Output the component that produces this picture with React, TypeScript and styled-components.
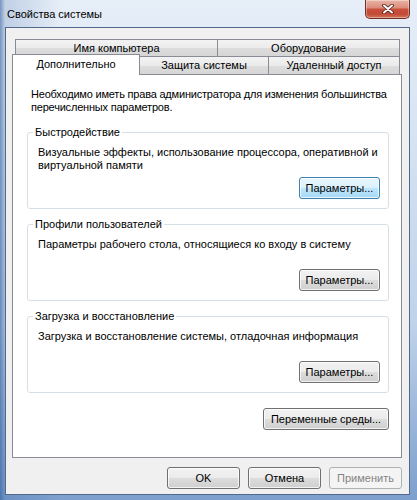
import React from 'react';
import styled, { createGlobalStyle } from 'styled-components';

// окно "Свойства системы" в стиле Windows 7

const GlobalStyle = createGlobalStyle`
  html, body {
    margin: 0;
    padding: 0;
  }
  body {
    font-family: 'Liberation Sans', Arial, sans-serif;
    font-size: 11px;
    color: #000;
    background: #9db8da;
  }
`;

const Window = styled.div`
  width: 417px;
  height: 500px;
  display: flex;
  flex-direction: column;
  overflow: hidden;
  background:
    linear-gradient(90deg, rgba(45, 90, 155, 0.6) 0px, rgba(45, 90, 155, 0.2) 5px, rgba(45, 90, 155, 0) 60px),
    linear-gradient(180deg, #e6eef8 0%, #d7e4f2 25%, #bfd2ea 65%, #7c9fcd 100%);
`;

const TitleBar = styled.div`
  height: 27px;
  display: flex;
  align-items: flex-start;
  justify-content: space-between;
  padding: 0 7px;
`;

const Title = styled.span`
  padding-top: 8px;
  line-height: 13px;
  color: #000;
`;

const CloseButton = styled.div`
  width: 45px;
  height: 19px;
  box-sizing: border-box;
  display: flex;
  align-items: center;
  justify-content: center;
  border: 1px solid #6e3128;
  border-top: none;
  border-radius: 0 0 5px 5px;
  background: linear-gradient(180deg, #eab4a7 0%, #dc8d7d 42%, #c8503c 52%, #c24a36 78%, #d5785a 100%);
  box-shadow: inset 0 0 0 1px rgba(255, 255, 255, 0.35);
`;

const Client = styled.div`
  flex: 1;
  display: flex;
  flex-direction: column;
  margin: 0 7px 5px 5px;
  padding: 11px 7px 5px 6px;
  border: 1px solid #52698a;
  background: #f0f0f0;
`;

const TabRow = styled.div<{ $front?: boolean }>`
  display: flex;
  height: ${p => (p.$front ? 18 : 17)}px;
  margin: 0 2px 0 ${p => (p.$front ? 0 : 3)}px;
`;

const Tab = styled.div<{ $width?: number; $active?: boolean }>`
  ${p => (p.$width ? `width: ${p.$width}px;` : 'flex: 1;')}
  display: flex;
  align-items: center;
  justify-content: center;
  border: 1px solid #898c95;
  border-bottom: none;
  margin-left: -1px;
  &:first-child {
    margin-left: 0;
  }
  background: linear-gradient(180deg, #f3f3f3 0%, #ebebeb 50%, #dddddd 51%, #d6d6d6 100%);
  line-height: 13px;
  white-space: nowrap;
  ${p =>
    p.$active &&
    `
    position: relative;
    z-index: 1;
    margin-top: -2px;
    margin-bottom: -1px;
    padding-bottom: 2px;
    background: #fff;
  `}
`;

const Panel = styled.div`
  flex: 1;
  display: flex;
  flex-direction: column;
  background: #fff;
  border: 1px solid #898c95;
  padding: 13px 4px 0 14px;
`;

const Intro = styled.p`
  margin: 0 -3px 3px 4px;
  line-height: 13px;
  letter-spacing: -0.2px;
`;

const Group = styled.fieldset`
  margin: 9px 8px 0 0;
  padding: 6px 8px 9px 10px;
  border: 1px solid #d5dfe5;
  border-radius: 3px;
  min-width: 0;
  display: flex;
  flex-direction: column;
`;

const GroupTitle = styled.legend`
  padding: 0 2px;
  margin-left: -5px;
  line-height: 13px;
`;

const Description = styled.div`
  min-height: 26px;
  margin-right: -8px;
  padding-top: 1px;
  line-height: 13px;
`;

const ButtonRow = styled.div<{ $gap?: number }>`
  display: flex;
  justify-content: flex-end;
  gap: ${p => p.$gap ?? 0}px;
`;

const GroupButtons = styled(ButtonRow)`
  margin-top: 5px;
`;

const EnvButtons = styled(ButtonRow)`
  margin: 15px 8px 0 0;
`;

const DialogButtons = styled(ButtonRow)`
  margin-top: 9px;
`;

const Button = styled.button<{ $width: number; $focused?: boolean }>`
  width: ${p => p.$width}px;
  height: 22px;
  padding: 0;
  font-family: inherit;
  font-size: 11px;
  color: #000;
  border: 1px solid #707070;
  border-radius: 3px;
  background: linear-gradient(180deg, #f2f2f2 0%, #ebebeb 49%, #dddddd 50%, #cfcfcf 100%);
  box-shadow: inset 0 0 0 1px rgba(255, 255, 255, 0.75);
  ${p =>
    p.$focused &&
    `
    border-color: #3c7fb1;
    background: linear-gradient(180deg, #eaf6fd 0%, #d9f0fc 49%, #bee6fd 50%, #a7d9f5 100%);
  `}
  &:disabled {
    color: #838383;
    border-color: #adb2b5;
    background: #f4f4f4;
    box-shadow: none;
  }
`;

const groups = [
  {
    title: 'Быстродействие',
    text: 'Визуальные эффекты, использование процессора, оперативной и виртуальной памяти',
    focused: true,
  },
  {
    title: 'Профили пользователей',
    text: 'Параметры рабочего стола, относящиеся ко входу в систему',
  },
  {
    title: 'Загрузка и восстановление',
    text: 'Загрузка и восстановление системы, отладочная информация',
  },
];

export default function App() {
  return (
    <>
      <GlobalStyle />
      <Window>
        <TitleBar>
          <Title>Свойства системы</Title>
          <CloseButton>
            <svg width="12" height="10" viewBox="0 0 12 10">
              <path d="M2 1.5 L10 8.5 M10 1.5 L2 8.5" stroke="#4b1c15" strokeWidth="3.6" strokeLinecap="round" />
              <path d="M2 1.5 L10 8.5 M10 1.5 L2 8.5" stroke="#fff" strokeWidth="2" strokeLinecap="round" />
            </svg>
          </CloseButton>
        </TitleBar>

        <Client>
          <TabRow>
            <Tab $width={201}>Имя компьютера</Tab>
            <Tab>Оборудование</Tab>
          </TabRow>
          <TabRow $front>
            <Tab $width={126} $active>Дополнительно</Tab>
            <Tab $width={128}>Защита системы</Tab>
            <Tab>Удаленный доступ</Tab>
          </TabRow>

          <Panel>
            <Intro>
              Необходимо иметь права администратора для изменения большинства перечисленных параметров.
            </Intro>

            {groups.map(g => (
              <Group key={g.title}>
                <GroupTitle>{g.title}</GroupTitle>
                <Description>{g.text}</Description>
                <GroupButtons>
                  <Button $width={81} $focused={g.focused}>Параметры...</Button>
                </GroupButtons>
              </Group>
            ))}

            <EnvButtons>
              <Button $width={126}>Переменные среды...</Button>
            </EnvButtons>
          </Panel>

          <DialogButtons $gap={8}>
            <Button $width={73}>OK</Button>
            <Button $width={73}>Отмена</Button>
            <Button $width={73} disabled>Применить</Button>
          </DialogButtons>
        </Client>
      </Window>
    </>
  );
}
